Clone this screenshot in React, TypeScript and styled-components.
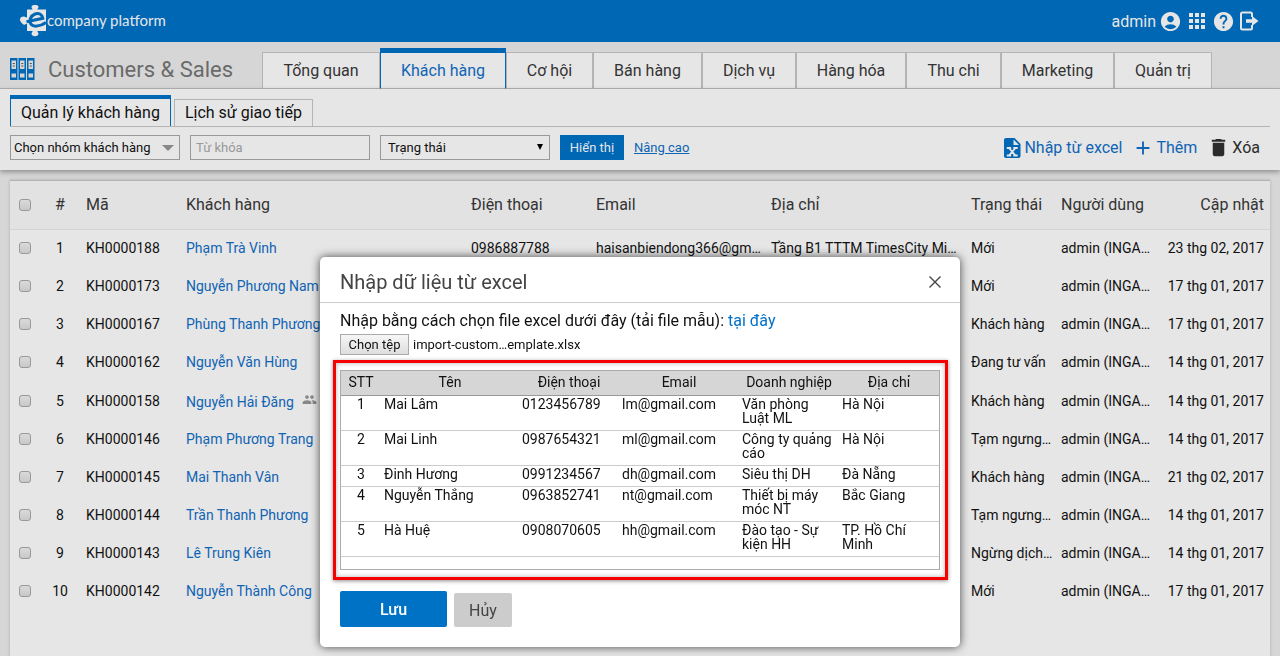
import React from "react";
import styled, { createGlobalStyle, css } from "styled-components";
import {
  MdAccountCircle,
  MdApps,
  MdHelp,
  MdAdd,
  MdDelete,
  MdPeople,
} from "react-icons/md";

const blue = "#0067b5";
const linkBlue = "#1064b4";

const GlobalStyle = createGlobalStyle`
  * { box-sizing: border-box; }
  html, body { margin: 0; height: 100%; overflow: hidden; }
  body { background: #d6d6d6; color: #111; font: 14px Roboto, "Noto Sans", sans-serif; }
  button, input, select { font-family: inherit; }
  a { color: ${linkBlue}; text-decoration: none; }
`;

const Page = styled.div`
  min-height: 100vh;
  display: flex;
  flex-direction: column;
`;

const TopBar = styled.header`
  height: 42px;
  flex: none;
  padding: 0 20px;
  background: ${blue};
  color: #e6e6e6;
  display: flex;
  align-items: center;
  justify-content: space-between;
`;

const Brand = styled.a`
  display: flex;
  align-items: center;
  color: #e6e6e6;
  font: 15px Lato, sans-serif;
`;

const BrandName = styled.span`
  padding-bottom: 3px;
`;

const UserArea = styled.div`
  display: flex;
  align-items: center;
  gap: 3px;
  font-size: 16px;
`;

const IconButton = styled.button`
  border: 0;
  padding: 0;
  background: none;
  color: inherit;
  display: flex;
`;

const Band = styled.div`
  height: 47px;
  padding-left: 10px;
  border-bottom: 1px solid #b4b4b4;
  display: flex;
  align-items: flex-end;
`;

const AppTitle = styled.h1`
  margin: 0;
  width: 252px;
  flex: none;
  height: 38px;
  display: flex;
  align-items: center;
  gap: 13px;
  font-size: 22px;
  font-weight: 400;
  color: #6a6a6a;
`;

const MainTabs = styled.nav`
  display: flex;
  align-items: flex-end;
  margin-bottom: -1px;
`;

const MainTab = styled.a<{ $width: number; $active?: boolean }>`
  width: ${(p) => p.$width}px;
  height: 37px;
  border: 1px solid #b4b4b4;
  background: #e6e6e6;
  color: #333;
  font-size: 16px;
  display: flex;
  align-items: center;
  justify-content: center;
  ${(p) =>
    p.$active &&
    css`
      height: 41px;
      border-color: ${blue};
      border-top-width: 5px;
      border-bottom-color: #b4b4b4;
      color: ${linkBlue};
    `}
`;

const Panel = styled.div`
  position: relative;
  background: #e6e6e6;
  padding: 6px 10px 10px;
  box-shadow: 0 2px 5px rgba(0, 0, 0, 0.35);
`;

const SubTabs = styled.nav`
  display: flex;
  align-items: flex-end;
  gap: 3px;
  border-bottom: 1px solid #b4b4b4;
`;

const SubTab = styled.a<{ $active?: boolean }>`
  height: 27px;
  padding: 0 10px;
  border: 1px solid #b4b4b4;
  border-bottom: 0;
  color: #111;
  font-size: 16px;
  line-height: 26px;
  ${(p) =>
    p.$active &&
    css`
      height: 31px;
      border-color: ${blue};
      border-top-width: 4px;
      line-height: 28px;
    `}
`;

const Filters = styled.form`
  display: flex;
  align-items: center;
  gap: 10px;
  margin-top: 8px;
`;

const fieldBox = css`
  height: 25px;
  border: 1px solid #999;
  border-radius: 0;
  background: #e6e6e6;
  color: #111;
  font-size: 13px;
`;

const SelectWrap = styled.label<{ $width: number }>`
  position: relative;
  width: ${(p) => p.$width}px;
  svg {
    position: absolute;
    right: 0;
    top: 0;
    pointer-events: none;
  }
`;

const Select = styled.select<{ $pad: number }>`
  ${fieldBox}
  width: 100%;
  appearance: none;
  padding: 0 ${(p) => p.$pad}px;
`;

const Keyword = styled.input`
  ${fieldBox}
  width: 180px;
  padding: 0 5px;
  &::placeholder { color: #999; }
`;

const ShowButton = styled.button`
  width: 64px;
  height: 25px;
  border: 0;
  padding: 0;
  background: ${blue};
  color: #e6e6e6;
  font-size: 13px;
`;

const Advanced = styled.a`
  font-size: 13px;
  text-decoration: underline;
`;

const Actions = styled.div`
  margin-left: auto;
  padding-right: 10px;
  display: flex;
  gap: 10px;
`;

const Action = styled.button<{ $dark?: boolean }>`
  border: 0;
  padding: 0;
  background: none;
  font-size: 16px;
  color: ${(p) => (p.$dark ? "#2b2b2b" : linkBlue)};
  display: flex;
  align-items: center;
  gap: 2px;
`;

const ListCard = styled.main`
  flex: 1;
  margin: 10px 10px 0;
  background: #e6e6e6;
  border-top: 1px solid #b4b4b4;
  box-shadow: 0 0 3px rgba(0, 0, 0, 0.2);
`;

const List = styled.table`
  width: 100%;
  table-layout: fixed;
  border-collapse: collapse;
  font-size: 14px;
  th, td {
    padding: 0;
    font-weight: 400;
    text-align: left;
    white-space: nowrap;
    overflow: hidden;
    text-overflow: ellipsis;
  }
  th {
    height: 48px;
    font-size: 16px;
    color: #333;
    background: #e2e2e2;
    border-bottom: 1px solid #d4d4d4;
  }
  th:nth-child(2), td:nth-child(2) { text-align: center; padding-right: 12px; }
  th:last-child, td:last-child { text-align: right; padding-right: 6px; }
`;

const CustomerRow = styled.tr<{ $tall?: boolean }>`
  height: ${(p) => (p.$tall ? 39 : 38)}px;
`;

const Tick = styled.input`
  appearance: none;
  display: block;
  width: 12px;
  height: 12px;
  margin: 0 0 0 9px;
  border: 1px solid #999;
  border-radius: 3px;
  background: linear-gradient(#dadada, #c8c8c8);
`;

const Shared = styled(MdPeople)`
  margin-left: 8px;
  color: #888;
`;

const Dialog = styled.section`
  position: fixed;
  left: calc(50% - 320px);
  top: 257px;
  width: 640px;
  padding-bottom: 20px;
  background: #fff;
  border-radius: 5px;
  box-shadow: 0 0 10px rgba(0, 0, 0, 0.7);
`;

const DialogHead = styled.header`
  height: 46px;
  padding: 4px 18px 0 20px;
  border-bottom: 1px solid #ccc;
  display: flex;
  align-items: center;
  justify-content: space-between;
  color: #444;
`;

const DialogTitle = styled.h2`
  margin: 0;
  font-size: 20px;
  font-weight: 400;
`;

const DialogBody = styled.div`
  padding: 8px 12px 0 13px;
`;

const Hint = styled.p`
  margin: 0 7px;
  font-size: 16px;
  line-height: 20px;
  a { color: #0070c8; }
`;

const FileRow = styled.div`
  display: flex;
  align-items: center;
  gap: 4px;
  margin: 3px 7px 5px;
  font-size: 13px;
`;

const FileButton = styled.button`
  width: 69px;
  height: 21px;
  padding: 0;
  border: 1px solid #aaa;
  background: linear-gradient(#f6f6f6, #dedede);
  color: #111;
  font-size: 13px;
`;

const Highlight = styled.div`
  border: 3px solid #f60000;
  padding: 7px 5px 7px 4px;
  box-shadow: 0 1px 4px rgba(0, 0, 0, 0.45), inset 0 0 5px rgba(0, 0, 0, 0.3);
`;

const PreviewBox = styled.div`
  border: 1px solid #aaa;
  height: 200px;
`;

const Preview = styled.table`
  width: 100%;
  table-layout: fixed;
  border-collapse: collapse;
  font-size: 14px;
  line-height: 14px;
  th {
    height: 24px;
    padding: 0 0 2px;
    font-weight: 400;
    background: #d6d6d6;
    border-bottom: 1px solid #999;
  }
  td {
    padding: 1px 0 5px 3px;
    vertical-align: top;
    border-bottom: 1px solid #ccc;
  }
  td:first-child { text-align: center; padding-left: 0; }
`;

const Buttons = styled.div`
  display: flex;
  align-items: flex-end;
  gap: 7px;
  padding: 11px 7px 0;
`;

const DialogButton = styled.button<{ $primary?: boolean }>`
  border: 0;
  border-radius: 2px;
  padding: 0;
  font-size: 16px;
  width: ${(p) => (p.$primary ? 107 : 58)}px;
  height: ${(p) => (p.$primary ? 36 : 34)}px;
  background: ${(p) => (p.$primary ? "#0072c6" : "#ccc")};
  color: ${(p) => (p.$primary ? "#fff" : "#444")};
  font-weight: ${(p) => (p.$primary ? 500 : 400)};
`;

const Logo = () => (
  <svg width="27" height="34" viewBox="0 0 27 34" aria-hidden="true">
    <path
      fill="#e6e6e6"
      d="M7 5.500h5.500c.4-.8-1-1.300-1-2.500C11.500 1.600 13 1 15 1s3.500.6 3.500 2c0 1.200-1.400 1.700-1 2.500H26v21.500h-8.500c-.4.8 1 1.600 1 2.800 0 1.500-1.500 2.500-3.500 2.500s-3.500-1-3.500-2.500c0-1.200 1.400-2 1-2.800H7v-7.200c-.9-.5-1.700 1-3.200 1C1.500 18.800 0 17.800 0 15.800s1.500-3.200 3.800-3.200c1.500 0 2.300 1.400 3.200.9z"
    />
    <path
      fill="none"
      stroke="#0067b5"
      strokeWidth="3"
      d="M6.500 17.800L22.800 14.300C22 10.200 18.500 8.500 15 10c-4.300 1.800-6.300 6.500-4.300 9.800 2 3.400 9 3.200 15.300-1.300"
    />
  </svg>
);

const Binders = () => (
  <svg width="25" height="22" viewBox="0 0 25 22" aria-hidden="true">
    {[0, 8.5, 17].map((x) => (
      <g key={x}>
        <path fill={blue} d={`M${x} 0h7.500v22h-7.500z`} />
        <path fill="#d6d6d6" d={`M${x + 1.5} 2.500h4.500v8.500h-4.500zM${x + 1.5} 15.500h4.500v4h-4.500z`} />
        <path fill="#555" d={`M${x + 2.8} 5h2v1h-2zM${x + 2.8} 7.500h2v1h-2z`} />
      </g>
    ))}
  </svg>
);

const SignOut = () => (
  <svg width="22" height="20" viewBox="0 0 22 20" aria-hidden="true">
    <path
      fill="none"
      stroke="currentColor"
      strokeWidth="2"
      d="M14 6V3c0-1-.5-1.500-1.500-1.500h-8C3.500 1.500 3 2 3 3v14c0 1 .5 1.500 1.500 1.500h8c1 0 1.500-.5 1.500-1.500v-3"
    />
    <path fill="currentColor" d="M8 8.200h6V5l6.500 5-6.500 5v-3.200H8z" />
  </svg>
);

const ExcelFile = () => (
  <svg width="18" height="20" viewBox="0 0 18 20" aria-hidden="true">
    <path fill={blue} d="M2 0h8.500l6 6v12c0 1.200-.8 2-2 2H2c-1.200 0-2-.8-2-2V2C0 .8.800 0 2 0z" />
    <path fill="#e6e6e6" d="M9.500 1.500V7H15z" />
    <path
      fill="none"
      stroke="#e6e6e6"
      strokeWidth="1.800"
      d="M2.800 10h4.400M9.300 10h4.400M5 10l6.500 7.500M11.500 10L5 17.500M2.800 17.500h4.400M9.300 17.500h4.400"
    />
  </svg>
);

const Cross = () => (
  <svg width="14" height="14" viewBox="0 0 14 14" aria-hidden="true">
    <path fill="none" stroke="currentColor" strokeWidth="1.400" d="M1.500 1.500l11 11M12.500 1.500l-11 11" />
  </svg>
);

const mainTabs: [string, number][] = [
  ["Tổng quan", 118],
  ["Khách hàng", 126],
  ["Cơ hội", 87],
  ["Bán hàng", 109],
  ["Dịch vụ", 94],
  ["Hàng hóa", 110],
  ["Thu chi", 95],
  ["Marketing", 113],
  ["Quản trị", 98],
];

const columns = ["#", "Mã", "Khách hàng", "Điện thoại", "Email", "Địa chỉ", "Trạng thái", "Người dùng", "Cập nhật"];
const columnWidths = [36, 40, 100, 285, 125, 175, 0, 90, 99, 110];

type Customer = { code: string; name: string; status: string; date: string; shared?: boolean };
const customers: Customer[] = [
  { code: "KH0000188", name: "Phạm Trà Vinh", status: "Mới", date: "23 thg 02, 2017" },
  { code: "KH0000173", name: "Nguyễn Phương Nam", status: "Mới", date: "17 thg 01, 2017" },
  { code: "KH0000167", name: "Phùng Thanh Phương", status: "Khách hàng", date: "17 thg 01, 2017" },
  { code: "KH0000162", name: "Nguyễn Văn Hùng", status: "Đang tư vấn", date: "14 thg 01, 2017" },
  { code: "KH0000158", name: "Nguyễn Hải Đăng", status: "Khách hàng", date: "14 thg 01, 2017", shared: true },
  { code: "KH0000146", name: "Phạm Phương Trang", status: "Tạm ngưng…", date: "14 thg 01, 2017" },
  { code: "KH0000145", name: "Mai Thanh Vân", status: "Khách hàng", date: "21 thg 02, 2017" },
  { code: "KH0000144", name: "Trần Thanh Phương", status: "Tạm ngưng…", date: "14 thg 01, 2017" },
  { code: "KH0000143", name: "Lê Trung Kiên", status: "Ngừng dịch…", date: "14 thg 01, 2017" },
  { code: "KH0000142", name: "Nguyễn Thành Công", status: "Mới", date: "17 thg 01, 2017" },
];

const previewColumns: [string, number][] = [
  ["STT", 40],
  ["Tên", 138],
  ["Điện thoại", 100],
  ["Email", 120],
  ["Doanh nghiệp", 100],
  ["Địa chỉ", 100],
];
const previewRows = [
  ["1", "Mai Lâm", "0123456789", "lm@gmail.com", "Văn phòng Luật ML", "Hà Nội"],
  ["2", "Mai Linh", "0987654321", "ml@gmail.com", "Công ty quảng cáo", "Hà Nội"],
  ["3", "Đinh Hương", "0991234567", "dh@gmail.com", "Siêu thị DH", "Đà Nẵng"],
  ["4", "Nguyễn Thắng", "0963852741", "nt@gmail.com", "Thiết bị máy móc NT", "Bắc Giang"],
  ["5", "Hà Huệ", "0908070605", "hh@gmail.com", "Đào tạo - Sự kiện HH", "TP. Hồ Chí Minh"],
];

export default function App() {
  return (
    <Page>
      <GlobalStyle />
      <TopBar>
        <Brand href="#">
          <Logo />
          <BrandName>company platform</BrandName>
        </Brand>
        <UserArea>
          admin
          <IconButton aria-label="Account"><MdAccountCircle size={23} /></IconButton>
          <IconButton aria-label="Apps"><MdApps size={24} /></IconButton>
          <IconButton aria-label="Help"><MdHelp size={23} /></IconButton>
          <IconButton aria-label="Sign out"><SignOut /></IconButton>
        </UserArea>
      </TopBar>
      <Band>
        <AppTitle>
          <Binders />
          Customers &amp; Sales
        </AppTitle>
        <MainTabs>
          {mainTabs.map(([name, width]) => (
            <MainTab key={name} href="#" $width={width} $active={name === "Khách hàng"}>
              {name}
            </MainTab>
          ))}
        </MainTabs>
      </Band>
      <Panel>
        <SubTabs>
          <SubTab href="#" $active>Quản lý khách hàng</SubTab>
          <SubTab href="#">Lịch sử giao tiếp</SubTab>
        </SubTabs>
        <Filters onSubmit={(e) => e.preventDefault()}>
          <SelectWrap $width={170}>
            <Select $pad={3} aria-label="Nhóm khách hàng">
              <option>Chọn nhóm khách hàng</option>
            </Select>
            <svg width="20" height="25" viewBox="0 0 20 25" aria-hidden="true">
              <path fill="#888" d="M2 10h12l-6 6z" />
            </svg>
          </SelectWrap>
          <Keyword placeholder="Từ khóa" aria-label="Từ khóa" />
          <SelectWrap $width={170}>
            <Select $pad={7} aria-label="Trạng thái">
              <option>Trạng thái</option>
            </Select>
            <svg width="20" height="25" viewBox="0 0 20 25" aria-hidden="true">
              <path fill="#000" d="M7 9h6l-3 6z" />
            </svg>
          </SelectWrap>
          <ShowButton>Hiển thị</ShowButton>
          <Advanced href="#">Nâng cao</Advanced>
          <Actions>
            <Action type="button"><ExcelFile />Nhập từ excel</Action>
            <Action type="button"><MdAdd size={22} />Thêm</Action>
            <Action type="button" $dark><MdDelete size={23} />Xóa</Action>
          </Actions>
        </Filters>
      </Panel>
      <ListCard>
        <List>
          <colgroup>
            {columnWidths.map((w, i) => (w ? <col key={i} width={w} /> : <col key={i} />))}
          </colgroup>
          <thead>
            <tr>
              <th><Tick type="checkbox" aria-label="Chọn tất cả" /></th>
              {columns.map((c) => <th key={c}>{c}</th>)}
            </tr>
          </thead>
          <tbody>
            {customers.map((c, i) => (
              <CustomerRow key={c.code} $tall={c.shared}>
                <td><Tick type="checkbox" aria-label={c.name} /></td>
                <td>{i + 1}</td>
                <td>{c.code}</td>
                <td>
                  <a href="#">{c.name}</a>
                  {c.shared && <Shared size={15} />}
                </td>
                <td>{i === 0 && "0986887788"}</td>
                <td>{i === 0 && "haisanbiendong366@gm…"}</td>
                <td>{i === 0 && "Tầng B1 TTTM TimesCity Mi…"}</td>
                <td>{c.status}</td>
                <td>admin (INGA…</td>
                <td>{c.date}</td>
              </CustomerRow>
            ))}
          </tbody>
        </List>
      </ListCard>
      <Dialog role="dialog" aria-labelledby="import-title">
        <DialogHead>
          <DialogTitle id="import-title">Nhập dữ liệu từ excel</DialogTitle>
          <IconButton aria-label="Đóng"><Cross /></IconButton>
        </DialogHead>
        <DialogBody>
          <Hint>
            Nhập bằng cách chọn file excel dưới đây (tải file mẫu): <a href="#">tại đây</a>
          </Hint>
          <FileRow>
            <FileButton>Chọn tệp</FileButton>
            <span>import-custom…emplate.xlsx</span>
          </FileRow>
          <Highlight>
            <PreviewBox>
              <Preview>
                <colgroup>
                  {previewColumns.map(([c, w]) => <col key={c} width={w} />)}
                </colgroup>
                <thead>
                  <tr>{previewColumns.map(([c]) => <th key={c}>{c}</th>)}</tr>
                </thead>
                <tbody>
                  {previewRows.map((row) => (
                    <tr key={row[0]}>{row.map((cell, i) => <td key={i}>{cell}</td>)}</tr>
                  ))}
                </tbody>
              </Preview>
            </PreviewBox>
          </Highlight>
          <Buttons>
            <DialogButton $primary>Lưu</DialogButton>
            <DialogButton>Hủy</DialogButton>
          </Buttons>
        </DialogBody>
      </Dialog>
    </Page>
  );
}
